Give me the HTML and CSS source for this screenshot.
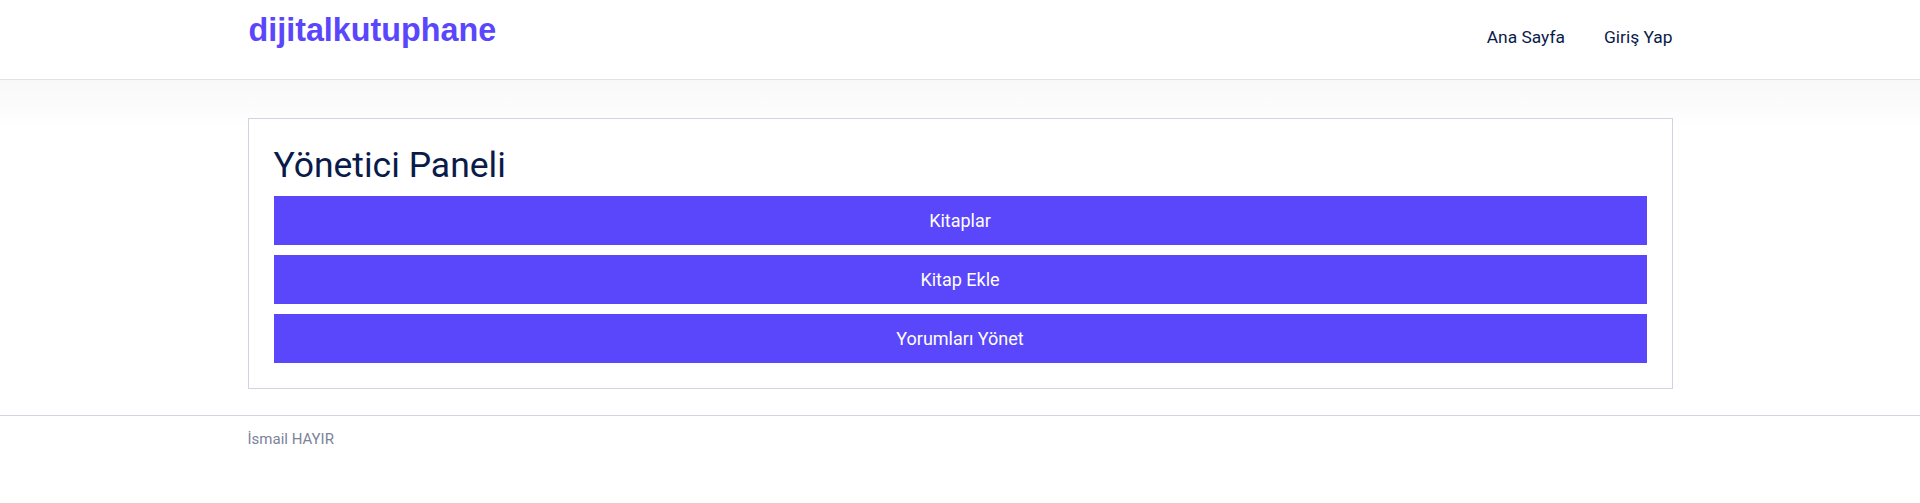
FILE: index.html
```html
<!DOCTYPE html>
<html lang="tr">
<head>
<meta charset="utf-8">
<title>dijitalkutuphane</title>
<link rel="stylesheet" href="styles.css">
</head>
<body>
<header class="site-header">
  <div class="container header-inner">
    <a class="logo" href="#">dijitalkutuphane</a>
    <nav class="nav">
      <a class="nav-link" href="#">Ana Sayfa</a>
      <a class="nav-link" href="#">Giriş Yap</a>
    </nav>
  </div>
</header>
<main class="main">
  <div class="container">
    <section class="card">
      <h1 class="card-title">Yönetici Paneli</h1>
      <div class="actions">
        <a class="btn" href="#">Kitaplar</a>
        <a class="btn" href="#">Kitap Ekle</a>
        <a class="btn" href="#">Yorumları Yönet</a>
      </div>
    </section>
  </div>
</main>
<footer class="site-footer">
  <div class="container">
    <p class="footer-text">İsmail HAYIR</p>
  </div>
</footer>
</body>
</html>
```

FILE: styles.css
```css
* { box-sizing: border-box; }
html, body { margin: 0; padding: 0; }
body {
  font-family: Roboto, "Liberation Sans", sans-serif;
  background: #fff;
  color: #0a1b4a;
}
a { text-decoration: none; }
.container {
  width: 1425px;
  margin: 0 auto;
}
.site-header {
  height: 80px;
  border-bottom: 1px solid #e2e2e2;
  background: #fff;
}
.header-inner {
  display: flex;
  align-items: flex-start;
  justify-content: space-between;
}
.logo {
  font-family: "Liberation Sans", Arial, sans-serif;
  font-weight: 700;
  font-size: 32.3px;
  color: #5b47fb;
  line-height: 37px;
  margin-top: 12px;
  padding-left: 1px;
}
.nav {
  display: flex;
  gap: 39px;
  margin-top: 27px;
}
.nav-link {
  font-size: 17.4px;
  line-height: 21px;
  color: #0a1b4a;
}
.main {
  background: linear-gradient(#f8f8f8, #fff 50px);
  padding-top: 38px;
  padding-bottom: 26px;
}
.card {
  border: 1px solid #cfd4e4;
  background: #fff;
  padding: 25px;
}
.card-title {
  margin: 0 0 10px 0;
  font-size: 35.5px;
  font-weight: 400;
  line-height: 42px;
  color: #0a1b4a;
}
.actions {
  display: flex;
  flex-direction: column;
  gap: 10px;
}
.btn {
  display: block;
  background: #5b47fb;
  color: #fff;
  text-align: center;
  font-size: 18px;
  line-height: 21px;
  padding: 14px 0;
}
.site-footer {
  border-top: 1px solid #d3d5de;
}
.footer-text {
  margin: 0;
  padding-top: 14px;
  font-size: 15px;
  line-height: 18px;
  color: #7b839a;
}
```
